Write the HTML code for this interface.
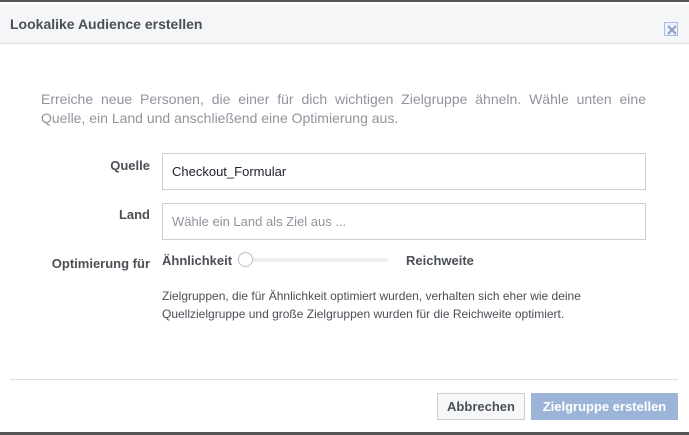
<!DOCTYPE html>
<html><head><meta charset="utf-8"><style>
*{margin:0;padding:0;box-sizing:border-box}
body{width:689px;height:435px;background:#fff;font-family:"Liberation Sans",Arial,sans-serif;position:relative;overflow:hidden}
.top{position:absolute;left:0;top:0;width:689px;height:2px;background:#555}
.hdr{position:absolute;left:0;top:5px;width:689px;height:39px;background:#f5f6f7;border-bottom:1px solid #e0e2e6}
.hdr h1{position:absolute;left:10px;top:11px;font-size:14px;font-weight:bold;color:#4b4f56}
.x{position:absolute;left:664px;top:17px;width:14px;height:14px;border:1px solid #a9bbe0;background:#eef2fa}
.x svg{position:absolute;left:1px;top:1px}
.intro{position:absolute;left:41px;top:90px;width:605px;font-size:14px;line-height:19px;color:#90949c}
.intro .l1{display:block;text-align:justify;text-align-last:justify}
.lbl{position:absolute;right:539px;font-size:13px;font-weight:bold;color:#4b4f56}
.inp{position:absolute;left:162px;width:484px;height:37px;border:1px solid #ccd0d5;font-size:13px;padding:10px 9px}
.s{position:absolute;font-size:13px;font-weight:bold;color:#4b4f56}
.track{position:absolute;left:240px;top:258px;width:148px;height:4px;background:#eceef1;border-radius:2px}
.knob{position:absolute;left:238px;top:252px;width:15px;height:15px;border:1px solid #b8bcc2;border-radius:50%;background:#fff}
.desc{position:absolute;left:162px;top:287px;font-size:12px;line-height:18px;color:#4b4f56}
.hr{position:absolute;left:10px;top:379px;width:668px;height:1px;background:#dddfe2}
.b1{position:absolute;left:437px;top:393px;width:88px;height:27px;border:1px solid #ccd0d5;background:#f6f7f9;font-size:13px;font-weight:bold;color:#4b4f56;text-align:center;line-height:25px}
.b2{position:absolute;left:531px;top:393px;width:147px;height:27px;background:#9cb4d8;font-size:13px;font-weight:bold;color:#fff;text-align:center;line-height:27px}
.bot{position:absolute;left:0;top:432px;width:689px;height:3px;background:#555}
</style></head><body>
<div class="top"></div>
<div class="hdr"><h1>Lookalike Audience erstellen</h1>
<div class="x"><svg width="12" height="12"><path d="M2 2L10 10M10 2L2 10" stroke="#8a9bc4" stroke-width="2"/></svg></div></div>
<div class="intro"><span class="l1">Erreiche neue Personen, die einer für dich wichtigen Zielgruppe ähneln. Wähle unten eine</span>Quelle, ein Land und anschließend eine Optimierung aus.</div>
<div class="lbl" style="top:158px">Quelle</div>
<div class="inp" style="top:153px;color:#1d2129">Checkout_Formular</div>
<div class="lbl" style="top:207px">Land</div>
<div class="inp" style="top:203px;color:#90949c">Wähle ein Land als Ziel aus ...</div>
<div class="lbl" style="top:256px">Optimierung für</div>
<div class="s" style="left:162px;top:253px">Ähnlichkeit</div>
<div class="track"></div><div class="knob"></div>
<div class="s" style="left:406px;top:253px">Reichweite</div>
<div class="desc">Zielgruppen, die für Ähnlichkeit optimiert wurden, verhalten sich eher wie deine<br>Quellzielgruppe und große Zielgruppen wurden für die Reichweite optimiert.</div>
<div class="hr"></div>
<div class="b1">Abbrechen</div>
<div class="b2">Zielgruppe erstellen</div>
<div class="bot"></div>
</body></html>
